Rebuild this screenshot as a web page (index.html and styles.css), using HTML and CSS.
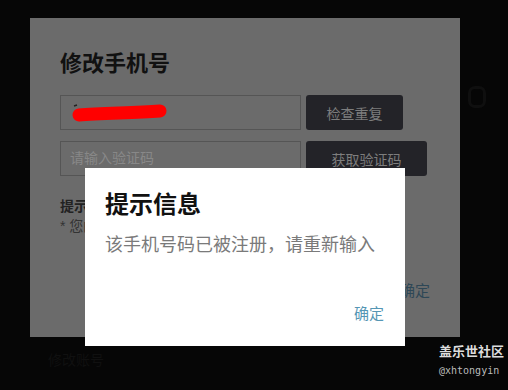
FILE: index.html
```html
<!DOCTYPE html>
<html lang="zh-CN">
<head>
    <meta charset="UTF-8">
    <meta name="viewport" content="width=device-width, initial-scale=1.0">
    <title>修改手机号</title>
    <link rel="stylesheet" href="styles.css">
</head>
<body>
    <div class="page">
        <div class="panel">
            <h1 class="panel-title">修改手机号</h1>
            <div class="row">
                <div class="field">
                    <svg class="scribble" width="110" height="24" viewBox="0 0 110 24">
                        <path d="M4 5 L7 4" stroke="#222" stroke-width="1.5" fill="none"/>
                        <path d="M9 14 C30 12 60 12 90 10" stroke="#ff0000" stroke-width="13" stroke-linecap="round" fill="none"/>
                    </svg>
                </div>
                <button class="btn">检查重复</button>
            </div>
            <div class="row">
                <div class="field placeholder">请输入验证码</div>
                <button class="btn btn-wide">获取验证码</button>
            </div>
            <div class="tips">
                <div class="tips-title">提示</div>
                <div class="tips-text">* 您的手机号将用于登录和找回密码</div>
            </div>
            <div class="panel-foot">确定</div>
        </div>
        <div class="under">修改账号</div>
        <div class="side-icon"></div>

        <!-- 弹出的提示框 -->
        <div class="dialog">
            <h2 class="dialog-title">提示信息</h2>
            <p class="dialog-msg">该手机号码已被注册，请重新输入</p>
            <div class="dialog-foot"><a class="dialog-ok">确定</a></div>
        </div>

        <div class="watermark">
            <div class="wm-name">盖乐世社区</div>
            <div class="wm-user">@xhtongyin</div>
        </div>
    </div>
</body>
</html>
```

FILE: styles.css
```css
/* 整体背景 */
body {
    margin: 0;
    background-color: #060606;
    font-family: "Liberation Sans", "Noto Sans CJK SC", sans-serif;
}

.page {
    position: relative;
    width: 508px;
    height: 390px;
    overflow: hidden;
}

/* 被遮罩的修改手机号面板 */
.panel {
    margin: 18px 0 0 30px;
    width: 430px;
    height: 319px;
    box-sizing: border-box;
    padding: 31px 30px 0 30px;
    background-color: #6b6b6b;
}

.panel-title {
    margin: 0 0 16px 0;
    font-size: 22px;
    line-height: 30px;
    font-weight: bold;
    color: #111;
}

.row {
    display: flex;
    gap: 5px;
    margin-bottom: 11px;
}

.field {
    width: 241px;
    height: 35px;
    box-sizing: border-box;
    border: 1px solid #555;
    position: relative;
}

.scribble {
    position: absolute;
    left: 9px;
    top: 5px;
}

.placeholder {
    padding-left: 9px;
    font-size: 14px;
    line-height: 33px;
    color: #888;
}

.btn {
    width: 97px;
    height: 35px;
    border: none;
    border-radius: 3px;
    background-color: #232328;
    color: #7d7d7d;
    font-family: inherit;
    font-size: 14px;
    padding: 0;
}

.btn-wide {
    width: 121px;
}

.tips {
    margin-top: 20px;
}

.tips-title {
    font-size: 14px;
    font-weight: bold;
    color: #222;
    line-height: 20px;
}

.tips-text {
    font-size: 14px;
    color: #333;
    line-height: 20px;
}

.panel-foot {
    margin-top: 43px;
    text-align: right;
    font-size: 15px;
    color: #2e4756;
}

.under {
    margin: 12px 0 0 48px;
    font-size: 14px;
    color: #101010;
}

.side-icon {
    position: absolute;
    left: 468px;
    top: 86px;
    width: 12px;
    height: 16px;
    border: 3px solid #0f0f0f;
    border-radius: 7px;
}

/* 白色提示框 */
.dialog {
    position: absolute;
    left: 85px;
    top: 168px;
    width: 320px;
    height: 178px;
    box-sizing: border-box;
    padding: 20px 20px 0 20px;
    background-color: #fff;
}

.dialog-title {
    margin: 0;
    font-size: 24px;
    line-height: 34px;
    font-weight: bold;
    color: #111;
}

.dialog-msg {
    margin: 10px 0 0 0;
    font-size: 18px;
    line-height: 26px;
    color: #7a7a7a;
}

.dialog-foot {
    margin-top: 44px;
    text-align: right;
    margin-right: 1px;
}

.dialog-ok {
    font-size: 15px;
    color: #5596b4;
}

/* 右下角水印 */
.watermark {
    position: absolute;
    left: 439px;
    top: 344px;
    color: #ddd;
}

.wm-name {
    font-size: 13px;
    font-weight: bold;
    line-height: 16px;
}

.wm-user {
    font-family: "DejaVu Sans Mono", monospace;
    font-size: 10px;
    line-height: 14px;
    margin-top: 4px;
    color: #bbb;
}
```
